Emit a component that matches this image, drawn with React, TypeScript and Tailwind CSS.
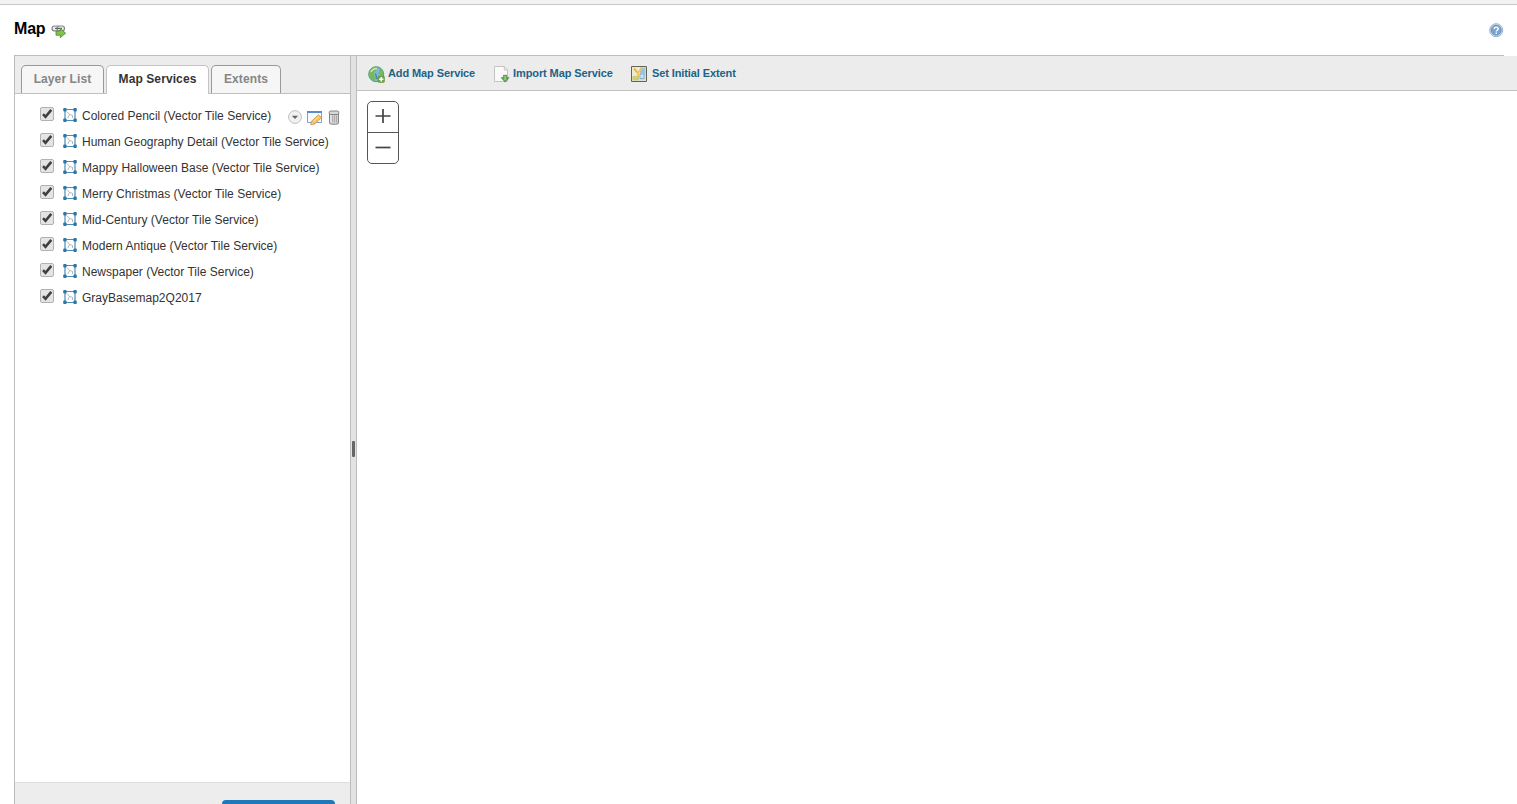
import { useState } from "react";

const SERVICES = [
  "Colored Pencil (Vector Tile Service)",
  "Human Geography Detail (Vector Tile Service)",
  "Mappy Halloween Base (Vector Tile Service)",
  "Merry Christmas (Vector Tile Service)",
  "Mid-Century (Vector Tile Service)",
  "Modern Antique (Vector Tile Service)",
  "Newspaper (Vector Tile Service)",
  "GrayBasemap2Q2017",
];

function LinkIcon() {
  return (
    <svg width="16" height="14" viewBox="0 0 16 14" className="mt-[5px] ml-[6px]">
      <rect x="1" y="2" width="7.5" height="4.8" rx="2.4" fill="#eee" stroke="#858585" strokeWidth="1.2" />
      <rect x="6" y="2" width="7.5" height="4.8" rx="2.4" fill="#eee" stroke="#858585" strokeWidth="1.2" />
      <path d="M4 4.4h7" stroke="#666" strokeWidth="1.2" />
      <path d="M5 7h4.2V4.5L14.7 9.2l-5.5 4.5V11.2H5z" fill="#83c450" stroke="#4a8c33" strokeWidth=".8" />
    </svg>
  );
}

function HelpIcon() {
  return (
    <svg width="15" height="15" viewBox="0 0 15 15">
      <circle cx="7.2" cy="7.2" r="6.5" fill="#d7e3f2" stroke="#8ba7ca" strokeWidth=".9" />
      <circle cx="7.2" cy="7.2" r="5" fill="#7ba3d2" stroke="#5581b6" strokeWidth=".7" />
      <path d="M5.3 5.9c0-2.4 3.9-2.3 3.9 0 0 1.4-1.9 1.3-1.9 2.6M7.3 9.6v1.3" fill="none" stroke="#fff" strokeWidth="1.4" />
    </svg>
  );
}

function VectorIcon() {
  return (
    <svg width="14" height="14" viewBox="0 0 14 14" className="ml-[9px] shrink-0">
      <path d="M2 1.5h10v11H2z" fill="#fff" stroke="#4a8db8" strokeWidth="1.2" />
      <path d="M4 3.5l2.5 3L4.8 10M6.5 6.5l3 .8V10" fill="none" stroke="#a0a8ae" strokeWidth=".8" />
      <g fill="#2f76a5">
        <rect x=".2" y="0" width="3.4" height="3.4" rx="1" />
        <rect x="10.4" y="0" width="3.4" height="3.4" rx="1" />
        <rect x=".2" y="10.6" width="3.4" height="3.4" rx="1" />
        <rect x="10.4" y="10.6" width="3.4" height="3.4" rx="1" />
      </g>
    </svg>
  );
}

function Checkbox({ label }: { label: string }) {
  const [on, setOn] = useState(true);
  return (
    <button
      type="button"
      role="checkbox"
      aria-checked={on}
      aria-label={label}
      onClick={() => setOn((v) => !v)}
      className="-mt-[3px] h-[14px] w-[14px] shrink-0 rounded-[2px] border border-[#b2b2b2] bg-[#e4e4e4]"
    >
      {on ? (
        <svg width="12" height="12" viewBox="0 0 12 12">
          <path d="M2 6.2 4.5 8.8 10.3 1.9" fill="none" stroke="#404040" strokeWidth="2.6" />
        </svg>
      ) : null}
    </button>
  );
}

function RowActions() {
  return (
    <div className="absolute top-[8px] left-[273px] flex">
      <svg width="14" height="14" viewBox="0 0 14 14">
        <circle cx="7" cy="7" r="6.4" fill="#f1f1f1" stroke="#b8b8b8" strokeWidth=".9" />
        <path d="M3.8 5.7h6.4L7 9z" fill="#666" />
      </svg>
      <svg width="17" height="16" viewBox="0 0 17 16" className="ml-[4px]">
        <path d="M1.5 1.5h14v11h-14z" fill="#f7faff" stroke="#7ca3d6" />
        <path d="M1 1h15v2H1z" fill="#5b8ccd" />
        <path d="m4.8 14.7.9-3.6 6.6-6.3 3.3 2.8-6.7 6.2z" fill="#f6c45c" stroke="#cf8b39" strokeWidth=".7" />
        <path d="m7.3 11.8 5.6-5.3" stroke="#ffe5a3" />
        <path d="m4.8 14.7.9-3.6 3.2 2.7z" fill="#efd6b0" stroke="#b77935" strokeWidth=".4" />
      </svg>
      <svg width="12" height="15" viewBox="0 0 12 15" className="ml-[5px]">
        <path d="M1.5 3.5h9v9.7c0 1.5-9 1.5-9 0z" fill="#d2d2d2" stroke="#858585" />
        <path d="M4.5 5.5v7M6.5 5.5v7M8.5 5.5v7" stroke="#a0a0a0" strokeWidth=".8" />
        <path d="M3 5v7.5" stroke="#f1f1f1" />
        <rect x="1.2" y="1" width="9.6" height="3.5" rx="1.5" fill="#d8d8d8" stroke="#777" strokeWidth=".9" />
      </svg>
    </div>
  );
}

function GlobeIcon() {
  return (
    <svg width="17" height="17" viewBox="0 0 17 17" className="mr-[3px]">
      <circle cx="8.2" cy="8.2" r="7.5" fill="#80b6d6" stroke="#559a70" />
      <path d="M1.2 6C3 2 6 .8 9 1.2L8 5 6 7v2.5l2 2.2-1.5 3C2 13 .7 9.4 1.2 6zM11 2l3 2 1.2 5-2.2.8-2.5-2.6L11.5 5z" fill="#76ba58" />
      <path d="M3 6c1.1-2.4 3-3.6 6-3.4" fill="none" stroke="#c3e3a2" strokeWidth="1.7" />
      <path d="M7.5 7.5 9 13" stroke="#4983b0" strokeWidth="1.3" />
      <rect x="10" y="10" width="6.5" height="6.5" rx="1.3" fill="#72a84e" stroke="#528b38" strokeWidth=".5" />
      <path d="M13.25 11.1v4.3M11.1 13.25h4.3" stroke="#fff" strokeWidth="1.5" />
    </svg>
  );
}

function ImportIcon() {
  return (
    <svg width="16" height="17" viewBox="0 0 16 17" className="mr-[3px]">
      <path d="M.5.5h9.8l3.2 3.2v11.8H.5z" fill="#fafafa" stroke="#c4c4c4" />
      <path d="M10.3.5v3.4h3.2" fill="#eee" stroke="#c4c4c4" />
      <path d="M9.4 9.3h3.4v2.4H15l-3.9 4.4-3.9-4.4h2.2z" fill="#6aaa59" stroke="#48823c" strokeWidth=".7" />
      <path d="M11.1 10v4" stroke="#b5d9a8" />
    </svg>
  );
}

function ExtentIcon() {
  return (
    <svg width="16" height="16" viewBox="0 0 16 16" className="mr-[5px]">
      <path d="M.5.5h15v15H.5z" fill="#eee9d2" />
      <path d="M9 1.5h5.5V9H9z" fill="#9cc2de" />
      <path d="M1.5 10H8v4.5H1.5z" fill="#b4d28c" />
      <path d="M8.5 7.5h6v7h-6z" fill="#c5d8e3" />
      <path d="m3 2 4 5 3.5-5M7 7v3l-5 3.5" fill="none" stroke="#f0c657" strokeWidth="1.7" />
      <path d="m3 3 3 3.5" stroke="#d39a39" />
      <path d="M9 8h4v4.5H9z" fill="#d8e4ec" stroke="#87aecb" />
      <path d="M.5.5h15v15H.5z" fill="none" stroke="#646454" />
    </svg>
  );
}

export default function App() {
  return (
    <div className="flex h-[804px] w-full flex-col overflow-hidden bg-white font-['Liberation_Sans',Arial,sans-serif] text-xs text-[#333]">
      <div className="h-[5px] shrink-0 border-b border-[#c8c8c8] bg-[#f3f3f3]" />
      <header className="mr-[13px] ml-[14px] flex h-[51px] shrink-0 items-start justify-between border-b border-[#bdbdbd]">
        <div className="flex pt-[14px]">
          <h1 className="text-base leading-[20px] font-bold tracking-[-0.2px] text-black">Map</h1>
          <LinkIcon />
        </div>
        <div className="pt-[18px]">
          <HelpIcon />
        </div>
      </header>
      <div className="ml-[14px] flex min-h-0 flex-1">
        <aside className="flex w-[336px] shrink-0 flex-col border-l border-[#bdbdbd]">
          <div className="flex h-[38px] shrink-0 items-end border-b border-[#c1c1c1] bg-[#ececec] pl-[6px] font-bold tracking-[0.1px] text-[#858585]">
            <button className="h-[28px] w-[83px] rounded-t-[5px] border border-b-0 border-[#999] bg-[#f6f6f6] pb-[2px]">
              Layer List
            </button>
            <button className="z-10 -mb-px ml-[2px] h-[29px] w-[103px] rounded-t-[5px] border border-b-0 border-[#c4c4c4] bg-white pb-[3px] text-[#333]">
              Map Services
            </button>
            <button className="ml-[2px] h-[28px] w-[70px] rounded-t-[5px] border border-b-0 border-[#999] bg-[#f6f6f6] pb-[2px]">
              Extents
            </button>
          </div>
          <ul className="flex-1 pt-[8px]">
            {SERVICES.map((name, i) => (
              <li key={name} className="relative flex h-[26px] items-center pl-[25px]">
                <Checkbox label={name} />
                <VectorIcon />
                <span className="mt-[2px] ml-[5px] tracking-[0.015px] whitespace-nowrap">{name}</span>
                {i === 0 ? <RowActions /> : null}
              </li>
            ))}
          </ul>
          <footer className="flex h-[22px] shrink-0 items-end justify-end border-t border-[#dedede] bg-[#ededed] pr-[15px]">
            <div className="h-[4px] w-[113px] rounded-t-[4px] bg-[#1f78b9]" />
          </footer>
        </aside>
        <div className="flex w-[7px] shrink-0 justify-center border-x border-[#bdbdbd] bg-[#e2e2e2]">
          <div className="mt-[385px] h-[16px] w-[3px] rounded-[1px] bg-[#666]" />
        </div>
        <main className="min-w-0 flex-1">
          <div className="flex h-[35px] items-center border-b border-[#c1c1c1] bg-[#ececec] pt-[2px] pl-[11px] text-[11px] font-bold tracking-[-0.1px] text-[#1c6387]">
            <button className="flex w-[126px] items-center">
              <GlobeIcon />
              <span className="-mt-px whitespace-nowrap">Add Map Service</span>
            </button>
            <button className="flex w-[137px] items-center">
              <ImportIcon />
              <span className="-mt-px whitespace-nowrap">Import Map Service</span>
            </button>
            <button className="flex items-center">
              <ExtentIcon />
              <span className="-mt-px whitespace-nowrap">Set Initial Extent</span>
            </button>
          </div>
          <div className="mt-[10px] ml-[10px] flex h-[63px] w-[32px] flex-col rounded-[5px] border border-[#555]">
            <button aria-label="Zoom in" className="flex h-[31px] items-center justify-center border-b border-[#555] pb-[2px]">
              <svg width="16" height="16" viewBox="0 0 16 16">
                <path d="M8 1v14M.5 8h15" stroke="#444" strokeWidth="1.7" />
              </svg>
            </button>
            <button aria-label="Zoom out" className="flex h-[30px] items-center justify-center">
              <svg width="16" height="16" viewBox="0 0 16 16">
                <path d="M.5 7.5h15" stroke="#444" strokeWidth="1.7" />
              </svg>
            </button>
          </div>
        </main>
      </div>
    </div>
  );
}
